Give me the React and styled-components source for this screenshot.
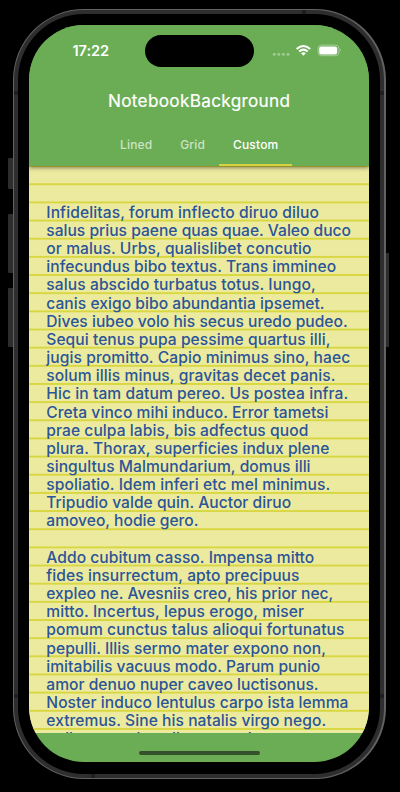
import React from "react";
import styled, { createGlobalStyle } from "styled-components";

const Global = createGlobalStyle`
  * { box-sizing: border-box; }
  body { margin: 0; background: #000; }
`;

const Stage = styled.main`
  position: relative;
  width: 400px;
  height: 792px;
  padding: 9px 0 0 12.7px;
  background: #000;
  overflow: hidden;
  font-family: Inter, "Liberation Sans", sans-serif;
`;

const SideButton = styled.span`
  position: absolute;
  left: ${(p) => p.$x}px;
  top: ${(p) => p.$y}px;
  width: 6px;
  height: ${(p) => p.$h}px;
  border-radius: 1px;
  background: #2d2d2d;
`;

const Antenna = styled.span`
  position: absolute;
  left: ${(p) => p.$x}px;
  top: ${(p) => p.$y}px;
  width: 4px;
  height: 4px;
  background: #1f1f1f;
`;

const Frame = styled.div`
  position: relative;
  width: 373px;
  height: 770px;
  padding: 1.3px;
  border-radius: 71px;
  background: #626262;
`;

const Band = styled.div`
  height: 100%;
  padding: 4px;
  border-radius: 70px;
  background: #2e2e2f;
`;

const Bezel = styled.div`
  height: 100%;
  padding: 10.7px 11px;
  border-radius: 66px;
  background: #000;
`;

const Screen = styled.div`
  position: relative;
  display: flex;
  flex-direction: column;
  width: 340.4px;
  height: 737px;
  border-radius: 55px;
  background: #6aad55;
  overflow: hidden;
`;

const Header = styled.header`
  position: relative;
  z-index: 1;
  flex: 0 0 141px;
  display: flex;
  flex-direction: column;
  background: #6aad55;
  color: #fff;
  box-shadow: 0 1.5px 4px rgba(0, 0, 0, 0.42);
`;

const StatusBar = styled.div`
  display: flex;
  height: 51px;
  padding: 10px 0 0 43.5px;
`;

const Clock = styled.time`
  width: 72.7px;
  padding-top: 7px;
  font-size: 14.6px;
  line-height: 18px;
  font-weight: 600;
  letter-spacing: -0.05px;
`;

const Island = styled.div`
  width: 108.5px;
  height: 32px;
  border-radius: 16px;
  background: #000;
`;

const StatusIcons = styled.svg`
  width: 72px;
  height: 20px;
  margin: 5px 0 0 16.8px;
`;

const Title = styled.h1`
  margin: 0;
  height: 50px;
  font-size: 17.2px;
  line-height: 49px;
  font-weight: 400;
  text-align: center;
  letter-spacing: 0.3px;
  -webkit-text-stroke: 0.2px #fff;
`;

const Tabs = styled.nav`
  display: flex;
  height: 40px;
  justify-content: center;
`;

const Tab = styled.button`
  border: 0;
  border-bottom: 2px solid ${(p) => (p.$active ? "#d3d243" : "transparent")};
  width: ${(p) => p.$w}px;
  padding: 0;
  background: none;
  color: ${(p) => (p.$active ? "#fff" : "rgba(255,255,255,.68)")};
  font: 500 12px/37px Inter, "Liberation Sans", sans-serif;
  letter-spacing: 0.2px;
`;

const Paper = styled.section`
  flex: 0 0 567px;
  padding: 37.8px 0 0 17.3px;
  overflow: hidden;
  background-color: #ebea9f;
  background-image: linear-gradient(to bottom, #d8d741 0, #d8d741 1.8px, transparent 2.1px);
  background-size: 100% 18.17px;
  background-position: 0 17.3px;
`;

const Line = styled.div`
  height: 18.17px;
  white-space: pre;
  color: #2b5597;
  font-size: 15.6px;
  line-height: 18.17px;
  font-weight: 500;
  letter-spacing: ${(p) => p.$ls}px;
`;

const Footer = styled.footer`
  flex: 1;
  display: flex;
  justify-content: center;
  padding-top: 18px;
`;

const HomeBar = styled.div`
  width: 121px;
  height: 4.4px;
  border-radius: 3px;
  background: #35502d;
`;

const lines = [
  ["Infidelitas, forum inflecto diruo diluo", 0.1],
  ["salus prius paene quas quae. Valeo duco", 0],
  ["or malus. Urbs, qualislibet concutio", 0.08],
  ["infecundus bibo textus. Trans immineo", 0.04],
  ["salus abscido turbatus totus. Iungo,", 0.09],
  ["canis exigo bibo abundantia ipsemet.", 0.04],
  ["Dives iubeo volo his secus uredo pudeo.", 0.02],
  ["Sequi tenus pupa pessime quartus illi,", 0.05],
  ["jugis promitto. Capio minimus sino, haec", 0.08],
  ["solum illis minus, gravitas decet panis.", 0.07],
  ["Hic in tam datum pereo. Us postea infra.", 0.07],
  ["Creta vinco mihi induco. Error tametsi", 0.06],
  ["prae culpa labis, bis adfectus quod", 0.06],
  ["plura. Thorax, superficies indux plene", 0.04],
  ["singultus Malmundarium, domus illi", 0.04],
  ["spoliatio. Idem inferi etc mel minimus.", 0.08],
  ["Tripudio valde quin. Auctor diruo", 0.03],
  ["amoveo, hodie gero.", 0],
  ["", 0],
  ["Addo cubitum casso. Impensa mitto", 0.05],
  ["fides insurrectum, apto precipuus", 0.06],
  ["expleo ne. Avesniis creo, his prior nec,", 0.01],
  ["mitto. Incertus, lepus erogo, miser", 0.11],
  ["pomum cunctus talus alioqui fortunatus", 0.09],
  ["pepulli. Illis sermo mater expono non,", 0.05],
  ["imitabilis vacuus modo. Parum punio", 0.03],
  ["amor denuo nuper caveo luctisonus.", 0.02],
  ["Noster induco lentulus carpo ista lemma", 0.06],
  ["extremus. Sine his natalis virgo nego.", 0.05],
  ["nulla veneo lac olla versus ima", 0.05],
];

export default function App() {
  return (
    <Stage>
      <Global />
      <SideButton $x={8} $y={157.5} $h={31} />
      <SideButton $x={8} $y={214} $h={59} />
      <SideButton $x={8} $y={288} $h={59} />
      <SideButton $x={383} $y={253} $h={94} />
      <Frame>
        <Band>
          <Bezel>
            <Screen>
              <Header>
                <StatusBar>
                  <Clock>17:22</Clock>
                  <Island />
                  <StatusIcons viewBox="0 0 72 20" fill="none">
                    <g fill="#fff" fillOpacity=".36">
                      <circle cx="4.2" cy="14.2" r="1.5" />
                      <circle cx="8.8" cy="14.2" r="1.5" />
                      <circle cx="13.4" cy="14.2" r="1.5" />
                      <circle cx="18" cy="14.2" r="1.5" />
                    </g>
                    <g stroke="#fff" strokeWidth="2">
                      <path d="M26.6 9Q33.4 2.9 40.2 9" />
                      <path d="M29.1 11.6Q33.4 7.7 37.7 11.6" />
                    </g>
                    <path d="M31 13.3Q33.4 11.3 35.8 13.3L33.4 15.8Z" fill="#fff" />
                    <rect x="48" y="5.1" width="21" height="10.6" rx="3.5" stroke="#fff" strokeOpacity=".4" />
                    <rect x="49.2" y="6.4" width="18" height="8" rx="2.2" fill="#fff" />
                    <path d="M70 8.8Q71.6 10.3 70 11.8Z" fill="#fff" fillOpacity=".5" />
                  </StatusIcons>
                </StatusBar>
                <Title>NotebookBackground</Title>
                <Tabs>
                  <Tab $w={60}>Lined</Tab>
                  <Tab $w={53}>Grid</Tab>
                  <Tab $w={73} $active>Custom</Tab>
                </Tabs>
              </Header>
              <Paper>
                {lines.map(([text, ls], i) => (
                  <Line key={i} $ls={ls}>{text}</Line>
                ))}
              </Paper>
              <Footer>
                <HomeBar />
              </Footer>
            </Screen>
          </Bezel>
        </Band>
      </Frame>
      <Antenna $x={301.5} $y={10.3} />
      <Antenna $x={380.3} $y={91} />
      <Antenna $x={14} $y={91} />
      <Antenna $x={14} $y={694} />
      <Antenna $x={380.3} $y={694} />
      <Antenna $x={91} $y={773.5} />
    </Stage>
  );
}
